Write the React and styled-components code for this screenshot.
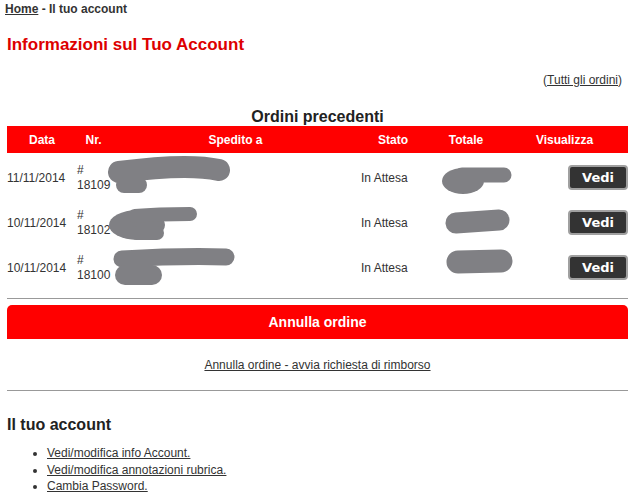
import React from "react";
import styled, { createGlobalStyle } from "styled-components";

const GlobalStyle = createGlobalStyle`
  body {
    margin: 0;
    background: #fff;
    font-family: "Liberation Sans", Arial, sans-serif;
    color: #333;
  }
`;

// redaction marks, coordinates relative to the row box
const orders = [
  {
    date: "11/11/2014",
    nr: "18109",
    status: "In Attesa",
    lines: [
      { d: "M112 17 C150 12 190 10 212 15", w: 22 },
      { d: "M117 30 L132 30", w: 16 },
      { d: "M455 20 L497 20", w: 15 },
    ],
    spots: [{ cx: 456, cy: 26, rx: 21, ry: 13 }],
  },
  {
    date: "10/11/2014",
    nr: "18102",
    status: "In Attesa",
    lines: [
      { d: "M128 16 C150 14 170 14 183 14", w: 14 },
      { d: "M130 33 L150 33", w: 14 },
      { d: "M449 23 L492 20", w: 21 },
    ],
    spots: [{ cx: 130, cy: 25, rx: 28, ry: 15 }],
  },
  {
    date: "10/11/2014",
    nr: "18100",
    status: "In Attesa",
    lines: [
      { d: "M115 14 C150 12 190 11 219 12", w: 17 },
      { d: "M118 30 L145 30", w: 20 },
      { d: "M451 17 L494 16", w: 23 },
    ],
    spots: [],
  },
];

function App() {
  return (
    <>
      <GlobalStyle />
      <Page>
        <Breadcrumb>
          <a href="#">Home</a> - Il tuo account
        </Breadcrumb>
        <Title>Informazioni sul Tuo Account</Title>
        <AllOrders>
          (<a href="#">Tutti gli ordini</a>)
        </AllOrders>
        <TableTitle>Ordini precedenti</TableTitle>
        <HeaderBar>
          <span>Data</span>
          <span>Nr.</span>
          <span>Spedito a</span>
          <span>Stato</span>
          <span>Totale</span>
          <span>Visualizza</span>
        </HeaderBar>
        <Rows>
          {orders.map((o) => (
            <Row key={o.nr}>
              <Cell>{o.date}</Cell>
              <NrCell>
                <span>#</span>
                <span>{o.nr}</span>
              </NrCell>
              <Cell />
              <Cell>{o.status}</Cell>
              <Cell />
              <ButtonCell>
                <ViewButton>Vedi</ViewButton>
              </ButtonCell>
              <Redaction viewBox="0 0 621 45" width="621" height="45">
                {o.spots.map((s, i) => (
                  <ellipse key={"e" + i} {...s} fill="#808084" />
                ))}
                {o.lines.map((b, i) => (
                  <path
                    key={i}
                    d={b.d}
                    stroke="#808084"
                    strokeWidth={b.w}
                    strokeLinecap="round"
                    fill="none"
                  />
                ))}
              </Redaction>
            </Row>
          ))}
        </Rows>
        <Rule />
        <CancelButton>Annulla ordine</CancelButton>
        <RefundLink>
          <a href="#">Annulla ordine - avvia richiesta di rimborso</a>
        </RefundLink>
        <Rule $top={18} />
        <SectionTitle>Il tuo account</SectionTitle>
        <LinkList>
          <li>
            <a href="#">Vedi/modifica info Account.</a>
          </li>
          <li>
            <a href="#">Vedi/modifica annotazioni rubrica.</a>
          </li>
          <li>
            <a href="#">Cambia Password.</a>
          </li>
        </LinkList>
      </Page>
    </>
  );
}

export default App;

const Page = styled.div`
  width: 621px;
  padding: 0 14px 0 7px;
  a {
    color: #333;
    text-decoration: underline;
  }
`;

const Breadcrumb = styled.div`
  margin: 2px 0 0 -2px;
  font-size: 12px;
  line-height: 14px;
  font-weight: bold;
  color: #333;
`;

const Title = styled.h1`
  margin: 19px 0 0;
  font-size: 17px;
  line-height: 20px;
  font-weight: bold;
  color: #dd0000;
`;

const AllOrders = styled.div`
  margin-top: 18px;
  padding-right: 6px;
  text-align: right;
  font-size: 12px;
  line-height: 14px;
  color: #333;
`;

const TableTitle = styled.h2`
  margin: 21px 0 0;
  text-align: center;
  font-size: 16px;
  line-height: 18px;
  font-weight: bold;
  color: #222;
`;

const columns = "70px 33px 251px 64px 82px 121px";

const HeaderBar = styled.div`
  display: grid;
  grid-template-columns: ${columns};
  align-items: center;
  height: 27px;
  background: #ff0000;
  color: #fff;
  font-size: 12px;
  font-weight: bold;
  text-align: center;
  span:last-child {
    padding-right: 6px;
  }
`;

const Rows = styled.div`
  padding-top: 2px;
`;

const Row = styled.div`
  position: relative;
  display: grid;
  grid-template-columns: ${columns};
  align-items: center;
  height: 45px;
  font-size: 12px;
  color: #333;
`;

const Cell = styled.div`
  white-space: nowrap;
`;

const NrCell = styled.div`
  display: flex;
  flex-direction: column;
  line-height: 15px;
  margin-top: 1px;
`;

const ButtonCell = styled.div`
  display: flex;
  justify-content: flex-end;
`;

const ViewButton = styled.button`
  width: 60px;
  height: 25px;
  padding: 0;
  background: #333;
  color: #fff;
  border: 2px solid #a0a0a0;
  border-radius: 4px;
  font-family: "DejaVu Sans", Verdana, sans-serif;
  font-size: 13px;
  font-weight: bold;
  cursor: pointer;
`;

const Redaction = styled.svg`
  position: absolute;
  left: 0;
  top: 0;
  pointer-events: none;
`;

const Rule = styled.hr`
  margin: ${(p) => p.$top ?? 8}px 0 0;
  border: 0;
  border-top: 1px solid #999;
  height: 0;
`;

const CancelButton = styled.div`
  margin-top: 6px;
  height: 34px;
  display: flex;
  align-items: center;
  justify-content: center;
  background: #ff0000;
  border-radius: 5px 5px 0 0;
  color: #fff;
  font-size: 14px;
  font-weight: bold;
`;

const RefundLink = styled.div`
  margin-top: 19px;
  text-align: center;
  font-size: 12px;
  line-height: 14px;
`;

const SectionTitle = styled.h3`
  margin: 24px 0 0;
  font-size: 16px;
  line-height: 20px;
  font-weight: bold;
  color: #222;
`;

const LinkList = styled.ul`
  margin: 10px 0 0;
  padding-left: 40px;
  font-size: 12px;
  line-height: 16.5px;
`;
